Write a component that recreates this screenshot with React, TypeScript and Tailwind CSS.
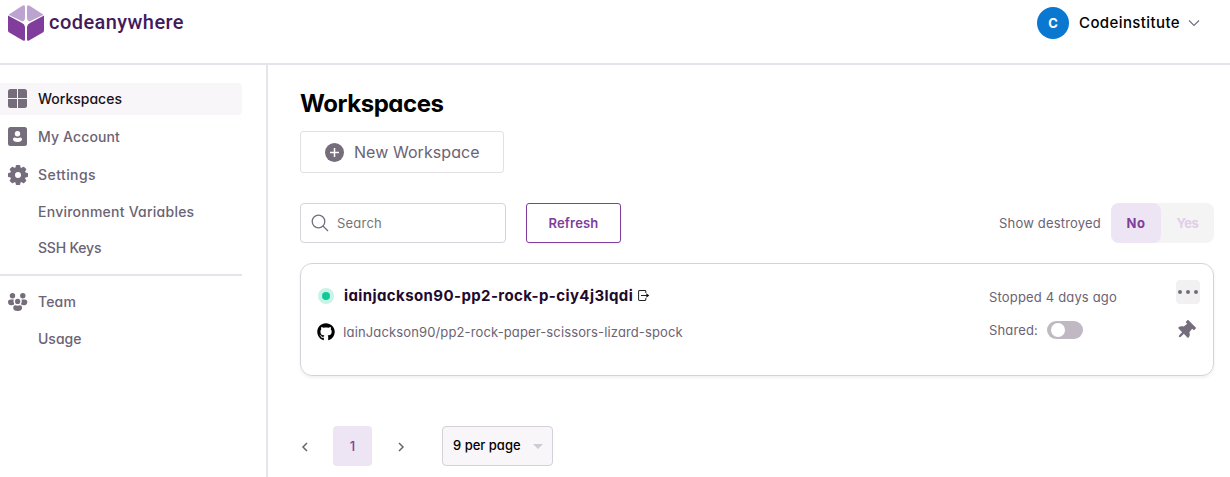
import React from 'react';
import { FaGithub, FaThumbtack } from 'react-icons/fa';

function Logo() {
  return (
    <svg width="36" height="36" viewBox="0 0 36 36" aria-hidden="true">
      <path d="M1.600 9 14 1Q17 -.8 17 2V13.500Q16.700 16 14.500 16.400L1.500 10.200Q.4 9.700 1.600 9Z" fill="#bda3cf" />
      <path d="M34.400 9 22 1Q19 -.8 19 2V13.500Q19.300 16 21.500 16.400L34.500 10.200Q35.600 9.700 34.400 9Z" fill="#bda3cf" />
      <path d="M0 10.500 14 18Q16.600 19 17 22V34.500Q17 36.500 15 35.400L1.200 27.600Q0 26.900 0 25.500Z" fill="#803d9b" />
      <path d="M36 10.500 22 18Q19.400 19 19 22V34.500Q19 36.500 21 35.400L34.800 27.600Q36 26.900 36 25.500Z" fill="#803d9b" />
    </svg>
  );
}

function GridIcon() {
  return (
    <svg width="20" height="20" viewBox="0 0 20 20" fill="#756c7c">
      <path d="M2.500 0H9v9H0V2.500A2.500 2.500 0 0 1 2.500 0Z" />
      <path d="M10 0h6.500A2.500 2.500 0 0 1 19 2.500V9h-9Z" />
      <path d="M0 10h9v9H2.500A2.500 2.500 0 0 1 0 16.500Z" />
      <path d="M10 10h9v6.500a2.500 2.500 0 0 1-2.500 2.500H10Z" />
    </svg>
  );
}

function AccountIcon() {
  return (
    <svg width="20" height="20" viewBox="0 0 20 20">
      <rect width="19" height="19" rx="2.500" fill="#756c7c" />
      <circle cx="9.500" cy="6.700" r="2.700" fill="#fff" />
      <path d="M5 12q0-1.500 1.500-1.500 1.500 0 3 .7 1.500-.7 3-.7Q14 10.500 14 12q0 3-4.500 3T5 12Z" fill="#fff" />
    </svg>
  );
}

function GearIcon() {
  return (
    <svg width="20" height="20" viewBox="0 0 20 20" fill="#756c7c">
      <g>
        <rect x="7.700" y="0" width="4.600" height="20" rx="1" />
        <rect x="7.700" y="0" width="4.600" height="20" rx="1" transform="rotate(45 10 10)" />
        <rect x="7.700" y="0" width="4.600" height="20" rx="1" transform="rotate(90 10 10)" />
        <rect x="7.700" y="0" width="4.600" height="20" rx="1" transform="rotate(135 10 10)" />
        <circle cx="10" cy="10" r="8" />
      </g>
      <circle cx="10" cy="10" r="3" fill="#fff" />
    </svg>
  );
}

function TeamIcon() {
  return (
    <svg width="20" height="20" viewBox="0 0 20 20" fill="#756c7c">
      <circle cx="4.500" cy="3.800" r="2.700" />
      <circle cx="14.800" cy="3.800" r="2.700" />
      <path d="M0 10q0-2.500 2.500-2.500H5.700Q5 10.500 6.400 12.300 5 13.300 3 13.200 0 13 0 10Z" />
      <path d="M19.300 10q0-2.500-2.500-2.500h-3.200q.7 3-.7 4.800 1.400 1 3.400.9 3-.2 3-3.200Z" />
      <circle cx="9.650" cy="9.400" r="2.600" />
      <path d="M5.200 15.500q0-2.200 2.200-2.200 2.300.8 4.500 0 2.200 0 2.200 2.200 0 3.500-4.450 3.500T5.200 15.500Z" />
    </svg>
  );
}

type RowProps = { label: string; text: string; row: string; icon?: React.ReactNode };

function NavRow({ label, text, row, icon }: RowProps) {
  return (
    <a className={'flex items-center pl-2 ' + row}>
      <span className="flex h-5 w-[30px] shrink-0">{icon}</span>
      <span className={'whitespace-nowrap text-[14px] font-medium leading-5 ' + text}>{label}</span>
    </a>
  );
}

export default function App() {
  return (
    <div className="flex h-[477px] w-[1230px] flex-col overflow-hidden bg-white font-['Inter',sans-serif] text-[#6b6374] [font-feature-settings:'cv11']">
      <header className="flex h-[65px] shrink-0 items-start justify-between border-b-2 border-[#e7e3ea] pl-2 pr-[30px]">
        <div className="flex items-start pt-[5px]">
          <Logo />
          <span className="ml-[5px] font-['Roboto',sans-serif] text-[20px] font-medium leading-[34px] tracking-[0.44px] text-[#451a5c]">codeanywhere</span>
        </div>
        <div className="flex items-center pt-[7px] text-black">
          <span className="flex size-8 items-center justify-center rounded-full bg-[#0a78d1] pt-px text-[13px] font-bold text-white">C</span>
          <span className="ml-[10px] pt-px text-[15px] font-medium tracking-[0.4px]">Codeinstitute</span>
          <svg className="ml-2" width="12" height="8" viewBox="0 0 12 8" fill="none" stroke="#756c7c" strokeWidth="1.100"><path d="m1 1.500 5 5 5-5" /></svg>
        </div>
      </header>
      <div className="flex min-h-0 flex-1">
        <nav className="w-[268px] shrink-0 border-r-2 border-[#e7e3ea] pr-6 pt-[18px]">
          <NavRow label="Workspaces" text="text-[#1a1120]" row="h-8 rounded-r bg-[#f8f6f9]" icon={<GridIcon />} />
          <NavRow label="My Account" text="tracking-[0.13px]" row="mt-[6px] h-8" icon={<AccountIcon />} />
          <NavRow label="Settings" text="tracking-[0.43px]" row="mt-[6px] h-8" icon={<GearIcon />} />
          <NavRow label="Environment Variables" text="tracking-[0.24px]" row="mt-[5px] h-8" />
          <NavRow label="SSH Keys" text="tracking-[-0.2px]" row="mt-1 h-8" />
          <div className="mt-[10px] h-[2px] bg-[#e7e3ea]" />
          <NavRow label="Team" text="tracking-[0.16px]" row="mt-[10px] h-8" icon={<TeamIcon />} />
          <NavRow label="Usage" text="tracking-[0px]" row="mt-[5px] h-8" />
        </nav>
        <main className="flex min-w-0 flex-1 flex-col pl-8 pr-4 pt-[23px]">
          <h1 className="text-[24px] font-bold leading-8 tracking-[-0.45px] text-black">Workspaces</h1>
          <button className="mt-[11px] flex h-[42px] w-[204px] items-center rounded-[3px] border border-[#e2e0e5] pl-6">
            <svg width="19" height="19" viewBox="0 0 19 19"><circle cx="9.500" cy="9.500" r="9.500" fill="#756c7c" /><path d="M9.500 5v9M5 9.500h9" stroke="#fff" strokeWidth="1.500" /></svg>
            <span className="ml-[10px] whitespace-nowrap text-[16px] tracking-[0.06px]">New Workspace</span>
          </button>
          <div className="mt-[30px] flex h-10 items-center text-[13px]">
            <div className="flex h-10 w-[206px] items-center rounded border border-[#d5d3dc] pl-[10px]">
              <svg width="18" height="18" viewBox="0 0 18 18" fill="none" stroke="#756c7c" strokeWidth="1.300"><circle cx="7.500" cy="7.500" r="6.300" /><path d="m12 12 5 5" /></svg>
              <span className="ml-2 pt-0.5 tracking-[0.22px] text-[#757575]">Search</span>
            </div>
            <button className="ml-5 h-10 w-[95px] rounded-[3px] border border-[#803d9b] pt-0.5 font-semibold tracking-[0.18px] text-[#803d9b] shadow-xs">Refresh</button>
            <span className="ml-auto pt-0.5 tracking-[0.19px]">Show destroyed</span>
            <div className="ml-[10px] flex h-10 w-[103px] rounded-lg bg-[#f4f4f4] font-bold">
              <button className="w-[50px] rounded-lg bg-[#ede5f4] pt-0.5 tracking-[0.5px] text-[#803d9b]">No</button>
              <button className="flex-1 pt-0.5 tracking-[-0.3px] text-[#e2cdea]">Yes</button>
            </div>
          </div>
          <section className="mt-5 flex h-[113px] rounded-xl border border-[#d5d3d9] pl-4 shadow-[0_2px_3px_rgba(0,0,0,0.06)]">
            <div className="flex flex-col pt-5">
              <div className="flex h-6 items-center">
                <span className="ml-px flex size-4 items-center justify-center rounded-full bg-[#c9f3e7]"><span className="size-2 rounded-full bg-[#0fca98]" /></span>
                <span className="ml-[10px] text-[15px] font-bold tracking-[0.4px] text-[#1e0a2e]">iainjackson90-pp2-rock-p-ciy4j3lqdi</span>
                <svg className="mb-0.5 ml-[5px]" width="12" height="11" viewBox="0 0 13 12" fill="none" stroke="#222" strokeWidth="1.100"><path d="M8.500 3.200V1.600Q8.500.6 7.500.6H1.600Q.6.600.6 1.600v8.800q0 1 1 1h5.900q1 0 1-1V8.800M3.200 6H10" /><path d="M9 3.600 12.300 6 9 8.400Z" fill="#111" stroke="none" /></svg>
              </div>
              <div className="mt-3 flex h-6 items-center">
                <FaGithub className="size-[18px] text-black" />
                <span className="ml-2 pt-0.5 text-[13px] tracking-[0.13px]">IainJackson90/pp2-rock-paper-scissors-lizard-spock</span>
              </div>
            </div>
            <div className="ml-auto w-[187px] pt-[21px] text-[13px]">
              <div className="h-6 leading-6 tracking-[0.17px]">Stopped 4 days ago</div>
              <div className="mt-[9px] flex h-6 items-center">
                <span className="pt-0.5 tracking-[0.15px]">Shared:</span>
                <span className="ml-[9px] flex h-[18px] w-9 items-center rounded-full bg-[#c0b9c3] pl-1"><span className="size-[14px] rounded-full bg-white" /></span>
              </div>
            </div>
            <div className="flex w-[37px] flex-col pt-4">
              <button className="flex size-6 items-center justify-center gap-1 rounded bg-[#f1f1f1]">
                <i className="size-[4px] rounded-full bg-[#756c7c]" /><i className="size-[4px] rounded-full bg-[#756c7c]" /><i className="size-[4px] rounded-full bg-[#756c7c]" />
              </button>
              <FaThumbtack className="mt-[17px] size-[19px] rotate-45 text-[#756c7c]" />
            </div>
          </section>
          <div className="mt-[50px] flex h-10 items-center text-[13px]">
            <svg className="ml-px mt-px" width="8" height="10" viewBox="0 0 8 10" fill="none" stroke="#6b6374" strokeWidth="1.500"><path d="M6 1 2 5l4 4" /></svg>
            <span className="ml-6 flex h-10 w-[39px] items-center justify-center rounded bg-[#ede5f4] pt-0.5 font-medium text-[#803d9b]">1</span>
            <svg className="ml-[26px] mt-px" width="8" height="10" viewBox="0 0 8 10" fill="none" stroke="#6b6374" strokeWidth="1.500"><path d="m1 1 4 4-4 4" /></svg>
            <div className="ml-9 flex h-10 w-[111px] items-center rounded border border-[#d5d0da] bg-[#f8f6f9] pl-[10px] text-black">
              <span className="text-[13px] font-medium">9 per page</span>
              <svg className="ml-3 mt-px" width="10" height="5" viewBox="0 0 10 5"><path d="M0 0h10L5 5Z" fill="#d0cad5" /></svg>
            </div>
          </div>
        </main>
      </div>
    </div>
  );
}
